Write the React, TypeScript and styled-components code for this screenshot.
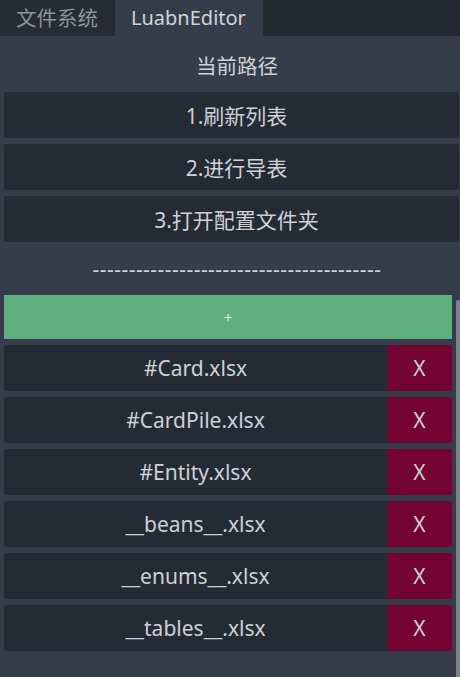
import React from "react";
import styled, { createGlobalStyle } from "styled-components";

const Global = createGlobalStyle`
  html, body { margin: 0; padding: 0; }
  body {
    width: 460px;
    height: 677px;
    overflow: hidden;
    background: #363d4a;
    font-family: "Noto Sans", "Noto Sans CJK SC", sans-serif;
    color: #cdd0d5;
  }
`;

const Root = styled.div`
  width: 460px;
  height: 677px;
  display: flex;
  flex-direction: column;
  background: #363d4a;
  overflow: hidden;
`;

const TabBar = styled.div`
  height: 36px;
  display: flex;
  background: #232831;
`;

const Tab = styled.div<{ $active?: boolean }>`
  height: 36px;
  padding: 0 17px 0 16px;
  display: flex;
  align-items: center;
  font-size: 20px;
  line-height: 1;
  background: ${(p) => (p.$active ? "#363d4a" : "#262b35")};
  color: ${(p) => (p.$active ? "#d0d3d8" : "#8f939a")};
`;

const Cjk = styled.span`
  font-size: 20.5px;
`;

const Panel = styled.div`
  flex: 1;
  display: flex;
  flex-direction: column;
  padding: 0 0 0 4px;
  min-height: 0;
`;

const Title = styled.div`
  height: 56px;
  display: flex;
  align-items: center;
  justify-content: center;
  font-size: 20.5px;
  padding: 2px 0 0 10px;
  box-sizing: border-box;
`;

const Buttons = styled.div`
  display: flex;
  flex-direction: column;
  gap: 6px;
  margin-right: 1px;
`;

const Btn = styled.div`
  height: 46px;
  border-radius: 3px;
  background: #252b35;
  display: flex;
  align-items: center;
  justify-content: center;
  font-size: 21px;
  padding-left: 10px;
`;

const Separator = styled.div`
  height: 53px;
  display: flex;
  align-items: center;
  justify-content: center;
  font-size: 21px;
  letter-spacing: 0.46px;
  padding-left: 10px;
`;

const ScrollArea = styled.div`
  flex: 1;
  display: flex;
  gap: 4px;
  min-height: 0;
`;

const List = styled.div`
  flex: 1;
  display: flex;
  flex-direction: column;
  gap: 6px;
`;

const Scrollbar = styled.div`
  width: 4px;
  margin-top: 5px;
  background: #7d8189;
  border-radius: 2px 0 0 0;
`;

const AddBar = styled.div`
  height: 44px;
  background: #5fae7e;
  display: flex;
  align-items: center;
  justify-content: center;
  font-size: 15px;
  color: #e4e6e8;
`;

const Row = styled.div`
  height: 46px;
  display: flex;
  border-radius: 3px;
  overflow: hidden;
`;

const Name = styled.div`
  flex: 1;
  background: #252b35;
  display: flex;
  align-items: center;
  justify-content: center;
  font-size: 21px;
`;

const Del = styled.div`
  width: 65px;
  background: #730431;
  display: flex;
  align-items: center;
  justify-content: center;
  font-size: 21px;
`;

const files = [
  "#Card.xlsx",
  "#CardPile.xlsx",
  "#Entity.xlsx",
  "__beans__.xlsx",
  "__enums__.xlsx",
  "__tables__.xlsx",
];

export default function App() {
  return (
    <Root>
      <Global />
      <TabBar>
        <Tab>
          <Cjk>文件系统</Cjk>
        </Tab>
        <Tab $active>LuabnEditor</Tab>
      </TabBar>
      <Panel>
        <Title>当前路径</Title>
        <Buttons>
          <Btn>1.刷新列表</Btn>
          <Btn>2.进行导表</Btn>
          <Btn>3.打开配置文件夹</Btn>
        </Buttons>
        <Separator>{"-".repeat(40)}</Separator>
        <ScrollArea>
          <List>
            <AddBar>+</AddBar>
            {files.map((f) => (
              <Row key={f}>
                <Name>{f}</Name>
                <Del>X</Del>
              </Row>
            ))}
          </List>
          <Scrollbar />
        </ScrollArea>
      </Panel>
    </Root>
  );
}
